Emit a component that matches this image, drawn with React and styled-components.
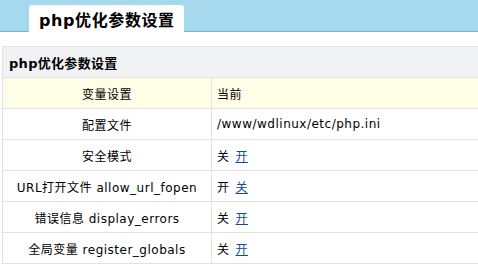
import styled, { createGlobalStyle } from 'styled-components'

const GlobalStyle = createGlobalStyle`
  html, body {
    margin: 0;
    padding: 0;
    background: #ffffff;
  }
  body {
    font-family: "DejaVu Sans", "Noto Sans CJK SC", sans-serif;
    font-size: 12px;
    color: #000;
  }
`

const Page = styled.div`
  width: 478px;
  height: 265px;
  overflow: hidden;
`

const TabBar = styled.div`
  display: flex;
  align-items: flex-end;
  height: 32px;
  padding-left: 29px;
  background: #a6d9ee;
  border-bottom: 1px solid #6db8e0;
  box-sizing: border-box;
`

const Tab = styled.div`
  display: flex;
  align-items: center;
  height: 27px;
  margin-bottom: -1px;
  padding: 0 9px 0 10px;
  background: #ffffff;
  border-radius: 3px 3px 0 0;
  font-size: 16px;
  font-weight: bold;
  letter-spacing: 0.6px;
`

const Content = styled.div`
  padding: 14px 0 0 2px;
`

const Table = styled.table`
  width: 600px;
  border-collapse: collapse;
  table-layout: fixed;
`

const Caption = styled.th`
  height: 30px;
  padding: 0 0 0 6px;
  text-align: left;
  background: #f1f2f4;
  border: 1px solid #e0e2e6;
  font-size: 13px;
  font-weight: bold;
  letter-spacing: 0.3px;
`

const Row = styled.tr`
  background: ${(p) => (p.$head ? '#fefde6' : '#ffffff')};
`

const Cell = styled.td`
  height: 30px;
  padding: 0 0 0 ${(p) => (p.$label ? '0' : '5px')};
  text-align: ${(p) => (p.$label ? 'center' : 'left')};
  border: 1px solid #e0e2e6;
  white-space: nowrap;
  letter-spacing: 0.5px;
`

const Toggle = styled.a`
  margin-left: 6px;
  color: #0e4ea0;
  text-decoration: underline;
  cursor: pointer;
`

const rows = [
  { label: '配置文件', value: '/www/wdlinux/etc/php.ini' },
  { label: '安全模式', on: false },
  { label: 'URL打开文件 allow_url_fopen', on: true },
  { label: '错误信息 display_errors', on: false },
  { label: '全局变量 register_globals', on: false },
]

export default function App() {
  return (
    <Page>
      <GlobalStyle />
      <TabBar>
        <Tab>php优化参数设置</Tab>
      </TabBar>
      <Content>
        <Table>
          <colgroup>
            <col style={{ width: '209px' }} />
            <col />
          </colgroup>
          <thead>
            <tr>
              <Caption colSpan={2}>php优化参数设置</Caption>
            </tr>
          </thead>
          <tbody>
            <Row $head>
              <Cell $label>变量设置</Cell>
              <Cell>当前</Cell>
            </Row>
            {rows.map((r) => (
              <Row key={r.label}>
                <Cell $label>{r.label}</Cell>
                <Cell>
                  {r.value ? (
                    r.value
                  ) : (
                    <>
                      {r.on ? '开' : '关'}
                      <Toggle>{r.on ? '关' : '开'}</Toggle>
                    </>
                  )}
                </Cell>
              </Row>
            ))}
          </tbody>
        </Table>
      </Content>
    </Page>
  )
}
